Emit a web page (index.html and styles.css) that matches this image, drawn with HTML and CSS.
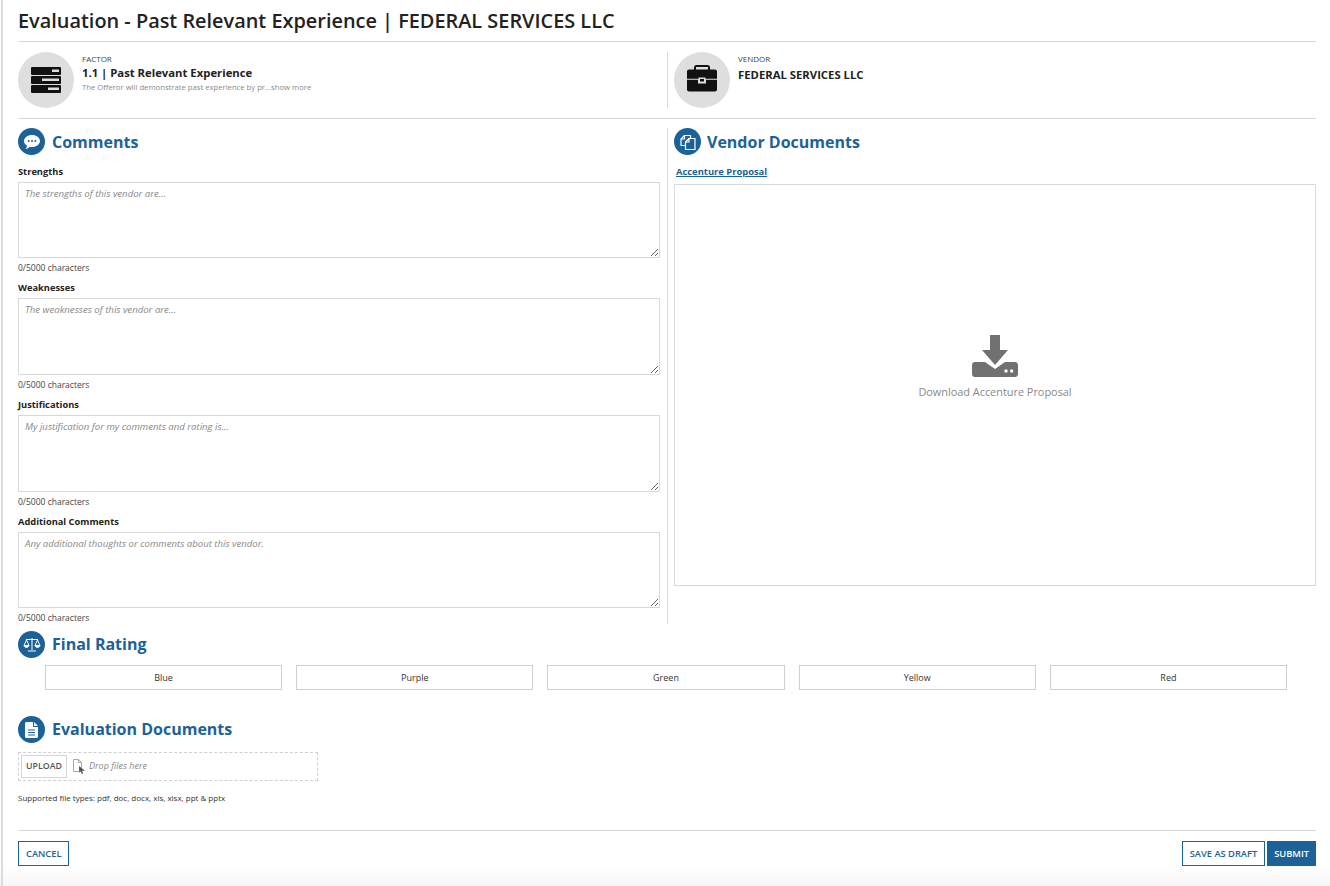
FILE: index.html
```html
<!DOCTYPE html>
<html lang="en">
<head>
    <meta charset="UTF-8">
    <meta name="viewport" content="width=device-width, initial-scale=1.0">
    <title>Evaluation</title>
    <link rel="stylesheet" href="styles.css">
</head>
<body>
    <div class="page">
        <h1>Evaluation - Past Relevant Experience | FEDERAL SERVICES LLC</h1>

        <div class="summary">
            <div class="summary-item factor">
                <div class="avatar">
                    <svg width="32" height="26" viewBox="0 0 32 26">
                        <rect x="1" y="0" width="30" height="8" rx="1" fill="#111"/>
                        <rect x="22" y="2.5" width="7" height="2.5" fill="#ddd"/>
                        <rect x="1" y="9" width="30" height="8" rx="1" fill="#111"/>
                        <rect x="12" y="11.5" width="17" height="2.5" fill="#ddd"/>
                        <rect x="1" y="18" width="30" height="8" rx="1" fill="#111"/>
                        <rect x="18" y="20.5" width="11" height="2.5" fill="#ddd"/>
                    </svg>
                </div>
                <div class="summary-text">
                    <div class="eyebrow">FACTOR</div>
                    <div class="summary-title">1.1 | Past Relevant Experience</div>
                    <div class="summary-desc">The Offeror will demonstrate past experience by pr...show more</div>
                </div>
            </div>
            <div class="summary-item vendor">
                <div class="avatar">
                    <svg class="case-icon" width="30" height="27" viewBox="0 0 30 27">
                        <path d="M7 5V2.5C7 1.1 8.1 0 9.5 0h11C21.9 0 23 1.1 23 2.5V5h-2V2H9v3z" fill="#111"/>
                        <path d="M2 4.5h26c1.1 0 2 .9 2 2v7.3H18.5v-1.3h-7v1.3H0V6.5c0-1.100.9-2 2-2z" fill="#111"/>
                        <path d="M0 14.800h11v3.700h8v-3.700h11v9.700c0 1.100-.9 2-2 2H2c-1.100 0-2-.9-2-2z" fill="#111"/>
                        <rect x="13" y="14" width="4" height="2.5" fill="#111"/>
                    </svg>
                </div>
                <div class="summary-text">
                    <div class="eyebrow">VENDOR</div>
                    <div class="summary-title vendor-name">FEDERAL SERVICES LLC</div>
                </div>
            </div>
        </div>

        <div class="columns">
            <div class="col-comments">
                <div class="section-head">
                    <span class="badge">
                        <svg width="16" height="14" viewBox="0 0 16 14">
                            <path d="M8 0c4.4 0 8 2.7 8 6s-3.6 6-8 6c-.8 0-1.5-.1-2.200-.2C4.700 12.900 3.200 13.800 1.500 14c.9-.9 1.400-2 1.500-3.200C1.200 9.700 0 8 0 6c0-3.300 3.600-6 8-6z" fill="#fff"/>
                            <circle cx="4.7" cy="6" r="1" fill="#1c6299"/>
                            <circle cx="8" cy="6" r="1" fill="#1c6299"/>
                            <circle cx="11.3" cy="6" r="1" fill="#1c6299"/>
                        </svg>
                    </span>
                    <h2>Comments</h2>
                </div>

                <div class="field">
                    <label>Strengths</label>
                    <textarea class="tall-a" placeholder="The strengths of this vendor are..."></textarea>
                    <div class="count">0/5000 characters</div>
                </div>
                <div class="field">
                    <label>Weaknesses</label>
                    <textarea class="tall-b" placeholder="The weaknesses of this vendor are..."></textarea>
                    <div class="count">0/5000 characters</div>
                </div>
                <div class="field">
                    <label>Justifications</label>
                    <textarea class="tall-b" placeholder="My justification for my comments and rating is..."></textarea>
                    <div class="count">0/5000 characters</div>
                </div>
                <div class="field">
                    <label>Additional Comments</label>
                    <textarea class="tall-a" placeholder="Any additional thoughts or comments about this vendor."></textarea>
                    <div class="count">0/5000 characters</div>
                </div>
            </div>

            <div class="col-docs">
                <div class="section-head">
                    <span class="badge">
                        <svg width="16" height="16" viewBox="0 0 16 16" fill="none" stroke="#fff" stroke-width="1.2" stroke-linejoin="round">
                            <path d="M10.5 4V1.5h-6L1 5v6.5h4.5"/>
                            <path d="M4.5 1.5V5H1"/>
                            <path d="M9 4.5h6v11H5.500V8z"/>
                            <path d="M9 4.5V8H5.500"/>
                        </svg>
                    </span>
                    <h2>Vendor Documents</h2>
                </div>
                <a class="doc-link" href="#">Accenture Proposal</a>
                <div class="doc-box">
                    <svg width="46" height="42" viewBox="0 0 46 42">
                        <path d="M18 0h10v15h8L23 30 10 15h8z" fill="#717171"/>
                        <path d="M3 27h10l10 7 10-7h10c1.700 0 3 1.300 3 3v9c0 1.700-1.300 3-3 3H3c-1.700 0-3-1.300-3-3v-9c0-1.700 1.300-3 3-3z" fill="#717171"/>
                        <circle cx="34" cy="36" r="1.7" fill="#fff"/>
                        <circle cx="39.7" cy="36" r="1.7" fill="#fff"/>
                    </svg>
                    <div class="doc-caption">Download Accenture Proposal</div>
                </div>
            </div>
        </div>

        <div class="section-head lower-head">
            <span class="badge">
                <svg width="18" height="15" viewBox="0 0 18 15" fill="none" stroke="#fff" stroke-width="1">
                    <path d="M9 1v12M5 14h8M3 2.5h12"/>
                    <path d="M3.500 3L1 8.500h5zM14.500 3L12 8.500h5z"/>
                    <path d="M1 8.500c.5 2.500 4.500 2.500 5 0zM12 8.500c.5 2.500 4.500 2.500 5 0z" fill="#fff"/>
                </svg>
            </span>
            <h2>Final Rating</h2>
        </div>
        <div class="ratings">
            <button class="rating" type="button">Blue</button>
            <button class="rating" type="button">Purple</button>
            <button class="rating" type="button">Green</button>
            <button class="rating" type="button">Yellow</button>
            <button class="rating" type="button">Red</button>
        </div>

        <div class="section-head lower-head eval-head">
            <span class="badge">
                <svg width="13" height="16" viewBox="0 0 13 16">
                    <path d="M1.500 0H8v5h5v9.500c0 .8-.7 1.500-1.500 1.500h-10C.7 16 0 15.300 0 14.500v-13C0 .7.7 0 1.500 0z" fill="#fff"/>
                    <path d="M9 0l4 4H9z" fill="#fff"/>
                    <path d="M3 8h7M3 10.500h7M3 13h7" stroke="#1c6299" stroke-width="1"/>
                </svg>
            </span>
            <h2>Evaluation Documents</h2>
        </div>
        <div class="dropzone">
            <button class="upload" type="button">UPLOAD</button>
            <svg class="drop-icon" width="13" height="15" viewBox="0 0 13 15">
                <path d="M.5.5h5l3 3v9h-8z" fill="#fff" stroke="#aaa"/>
                <path d="M5.5.5v3h3" fill="none" stroke="#aaa"/>
                <path d="M6 7l.2 6.500 1.500-1.300 1.200 2.800 1.300-.6-1.200-2.700H12z" fill="#555"/>
            </svg>
            <span class="drop-text">Drop files here</span>
        </div>
        <p class="supported">Supported file types: pdf, doc, docx, xls, xlsx, ppt &amp; pptx</p>

        <div class="actions">
            <button class="btn-outline" type="button">CANCEL</button>
            <div class="actions-right">
                <button class="btn-outline" type="button">SAVE AS DRAFT</button>
                <button class="btn-solid" type="button">SUBMIT</button>
            </div>
        </div>
    </div>
</body>
</html>
```

FILE: styles.css
```css
* {
    box-sizing: border-box;
}
html, body {
    height: 100%;
}
body {
    margin: 0;
    font-family: "Open Sans", Arial, sans-serif;
    color: #222;
    background: linear-gradient(to bottom, #fff 866px, #f6f6f6 886px);
    overflow: hidden;
}
.page {
    height: 886px;
    margin-left: 1px;
    border-left: 2px solid #dcdcdc;
    padding: 0 14px 0 15px;
}
h1 {
    margin: 0;
    height: 42px;
    padding-top: 6px;
    font-size: 19.9px;
    line-height: 30px;
    font-weight: 600;
    color: #222;
    border-bottom: 1px solid #d9d9d9;
}
.summary {
    display: flex;
    height: 77px;
    padding-top: 10px;
    border-bottom: 1px solid #d9d9d9;
}
.summary-item {
    display: flex;
    height: 56px;
}
.factor {
    width: 650px;
    border-right: 1px solid #d9d9d9;
}
.vendor {
    padding-left: 6px;
}
.avatar {
    width: 56px;
    height: 56px;
    border-radius: 50%;
    background: #dedede;
    display: flex;
    align-items: center;
    justify-content: center;
    margin-right: 8px;
    flex-shrink: 0;
}
.case-icon {
    margin-bottom: 3px;
}
.eyebrow {
    font-size: 8px;
    line-height: 14px;
    color: #444;
}
.summary-title {
    font-size: 11.3px;
    line-height: 13px;
    font-weight: 700;
    color: #222;
}
.vendor-name {
    line-height: 18px;
}
.summary-desc {
    font-size: 7.7px;
    line-height: 12px;
    margin-top: 2px;
    color: #8a8a8a;
}
.columns {
    display: flex;
    align-items: flex-start;
    height: 512px;
    padding-top: 9px;
}
.col-comments {
    width: 650px;
    height: 496px;
    padding-right: 7px;
    border-right: 1px solid #d9d9d9;
}
.col-docs {
    flex: 1;
    padding-left: 6px;
}
.col-docs .badge {
    margin-right: 6px;
}
.section-head {
    display: flex;
    align-items: center;
    height: 27px;
}
.badge {
    width: 27px;
    height: 27px;
    border-radius: 50%;
    background: #1c6299;
    display: flex;
    align-items: center;
    justify-content: center;
    margin-right: 7px;
}
h2 {
    margin: 0;
    padding-top: 1px;
    font-size: 16px;
    line-height: 27px;
    font-weight: 700;
    color: #1c6299;
}
.lower-head h2 {
    padding-top: 0;
}
.field {
    padding-top: 10px;
    height: 117px;
}
.section-head + .field {
    padding-top: 9px;
    height: 115px;
}
.field label {
    display: block;
    padding-top: 1px;
    font-size: 9.3px;
    line-height: 14px;
    font-weight: 700;
    color: #222;
    margin-bottom: 3px;
}
textarea {
    display: block;
    width: 100%;
    border: 1px solid #d9d9d9;
    padding: 4px 6px;
    font-family: "Open Sans", Arial, sans-serif;
    font-size: 9.6px;
    line-height: 14px;
    outline: none;
    background: #fff;
}
textarea::placeholder {
    font-style: italic;
    color: #888;
}
.tall-a {
    height: 76px;
}
.tall-b {
    height: 77px;
}
.count {
    font-size: 8.5px;
    line-height: 12px;
    color: #444;
    margin-top: 4px;
}
.doc-link {
    display: block;
    margin: 10px 0 6px 2px;
    font-size: 9.4px;
    line-height: 13px;
    font-weight: 700;
    color: #1c6299;
}
.doc-box {
    width: 642px;
    height: 402px;
    border: 1px solid #d9d9d9;
    display: flex;
    flex-direction: column;
    align-items: center;
    padding-top: 150px;
}
.doc-caption {
    font-size: 10.9px;
    line-height: 16px;
    color: #888;
    margin-top: 7px;
}
.ratings {
    display: flex;
    gap: 14px;
    margin: 7px 0 0 27px;
    padding-right: 29px;
}
.rating {
    flex: 1;
    height: 25px;
    background: #fff;
    border: 1px solid #cfcfcf;
    font-family: "Open Sans", Arial, sans-serif;
    font-size: 9px;
    color: #333;
    padding: 0;
}
.eval-head {
    margin-top: 26px;
}
.dropzone {
    display: flex;
    align-items: center;
    width: 300px;
    height: 29px;
    margin-top: 9px;
    padding-left: 2px;
    border: 1px dashed #cfcfcf;
}
.upload {
    width: 46px;
    height: 23px;
    padding: 0 0 2px;
    background: #fff;
    border: 1px solid #d5d5d5;
    font-family: "Open Sans", Arial, sans-serif;
    font-size: 8.8px;
    font-weight: 600;
    color: #555;
}
.drop-icon {
    margin-left: 6px;
}
.drop-text {
    margin-left: 3px;
    padding-bottom: 2px;
    font-size: 9px;
    font-style: italic;
    color: #888;
}
.supported {
    margin: 10px 0 0;
    padding-bottom: 1px;
    font-size: 8px;
    line-height: 14px;
    color: #333;
}
.actions {
    display: flex;
    justify-content: space-between;
    margin-top: 24px;
    padding-top: 10px;
    border-top: 1px solid #d9d9d9;
}
.actions-right {
    display: flex;
    gap: 2px;
}
.btn-outline, .btn-solid {
    height: 25px;
    font-family: "Open Sans", Arial, sans-serif;
    font-size: 9.3px;
    font-weight: 600;
    border: 1.5px solid #1c6299;
}
.btn-outline {
    padding: 0 7px;
    background: #fff;
    color: #1c6299;
}
.btn-solid {
    padding: 0 6px;
    background: #1c6299;
    color: #fff;
}
```
